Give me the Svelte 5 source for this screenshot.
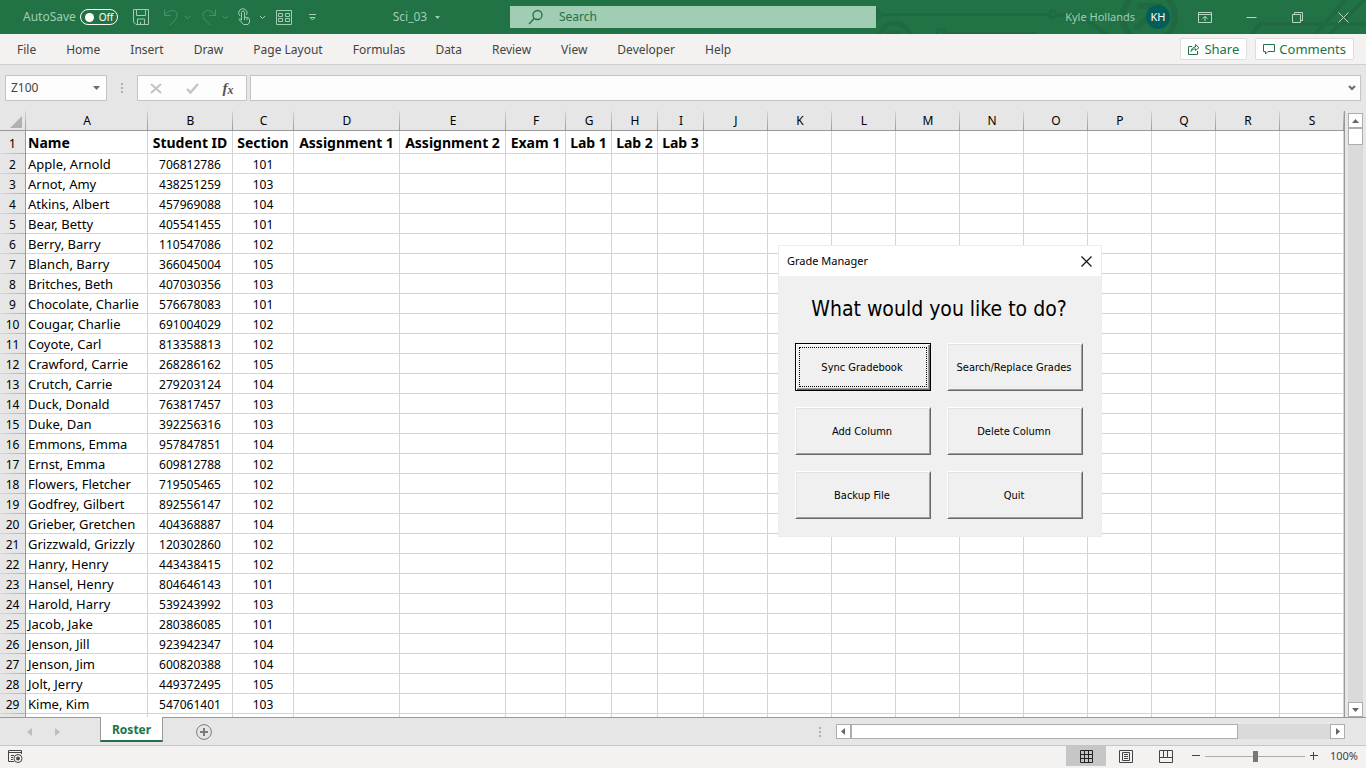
<script>
  const tabs = ['File', 'Home', 'Insert', 'Draw', 'Page Layout', 'Formulas', 'Data', 'Review', 'View', 'Developer', 'Help'];

  const columns = [
    { letter: 'A', width: 122, title: 'Name' },
    { letter: 'B', width: 85, title: 'Student ID' },
    { letter: 'C', width: 61, title: 'Section' },
    { letter: 'D', width: 106, title: 'Assignment 1' },
    { letter: 'E', width: 106, title: 'Assignment 2' },
    { letter: 'F', width: 60, title: 'Exam 1' },
    { letter: 'G', width: 46, title: 'Lab 1' },
    { letter: 'H', width: 46, title: 'Lab 2' },
    { letter: 'I', width: 46, title: 'Lab 3' },
    ...'JKLMNOPQRS'.split('').map((letter) => ({ letter, width: 64, title: '' }))
  ];

  const students = [
    ['Apple, Arnold', '706812786', '101'],
    ['Arnot, Amy', '438251259', '103'],
    ['Atkins, Albert', '457969088', '104'],
    ['Bear, Betty', '405541455', '101'],
    ['Berry, Barry', '110547086', '102'],
    ['Blanch, Barry', '366045004', '105'],
    ['Britches, Beth', '407030356', '103'],
    ['Chocolate, Charlie', '576678083', '101'],
    ['Cougar, Charlie', '691004029', '102'],
    ['Coyote, Carl', '813358813', '102'],
    ['Crawford, Carrie', '268286162', '105'],
    ['Crutch, Carrie', '279203124', '104'],
    ['Duck, Donald', '763817457', '103'],
    ['Duke, Dan', '392256316', '103'],
    ['Emmons, Emma', '957847851', '104'],
    ['Ernst, Emma', '609812788', '102'],
    ['Flowers, Fletcher', '719505465', '102'],
    ['Godfrey, Gilbert', '892556147', '102'],
    ['Grieber, Gretchen', '404368887', '104'],
    ['Grizzwald, Grizzly', '120302860', '102'],
    ['Hanry, Henry', '443438415', '102'],
    ['Hansel, Henry', '804646143', '101'],
    ['Harold, Harry', '539243992', '103'],
    ['Jacob, Jake', '280386085', '101'],
    ['Jenson, Jill', '923942347', '104'],
    ['Jenson, Jim', '600820388', '104'],
    ['Jolt, Jerry', '449372495', '105'],
    ['Kime, Kim', '547061401', '103']
  ];

  const actions = ['Sync Gradebook', 'Search/Replace Grades', 'Add Column', 'Delete Column', 'Backup File', 'Quit'];

  let cellRef = $state('Z100');
  let formula = $state('');
  let query = $state('');
  let zoom = $state(100);
</script>

<div class="app">
  <header class="titlebar">
    <svg class="circuit" width="500" height="34" viewBox="866 0 500 34" fill="none" stroke="#1f6a42" stroke-width="4" aria-hidden="true">
      <path d="M877 10v9l5-4.500zM880 14.500h169" stroke-width="3" />
      <circle cx="1053" cy="14.500" r="3.500" stroke-width="3" />
      <path d="M1057 15h16q8 0 14 5l22 16" />
      <circle cx="895" cy="38" r="15" stroke-width="5" />
      <path d="M886 33h16" />
      <circle cx="941" cy="33" r="3.500" stroke-width="3" />
      <path d="M946 34h90" />
      <circle cx="1149" cy="17" r="26" stroke-width="6" />
      <path d="M1137 6h26M1158 8l-22 21" stroke-width="6" />
      <path d="M1250 36l10-12h106M1314 36l33-38M1328 36l38-38" />
    </svg>
    <div class="quick">
      <span class="autosave">AutoSave</span>
      <button class="toggle" aria-label="AutoSave"><i></i><span>Off</span></button>
      <button class="tool save" aria-label="Save">
        <svg width="18" height="18" viewBox="0 0 18 18"><path d="M1.500 1.500h15v15H4L1.500 14zM4.500 1.500v6h9v-6M5.500 16.500v-5.500h7v5.500M8.500 16v-2" /></svg>
      </button>
      <button class="tool dim undo" aria-label="Undo">
        <svg width="16" height="18" viewBox="0 0 16 18"><path d="M1.500 1.500v6h6M1.500 7.500C4 4 6.500 2.500 9.500 2.500c3 0 4.500 2 4.500 4.500 0 4-3 6-7 10" /></svg>
        <svg width="7" height="5" viewBox="0 0 7 5"><path d="M1 1l2.500 2.500L6 1" /></svg>
      </button>
      <button class="tool dim redo" aria-label="Redo">
        <svg width="16" height="18" viewBox="0 0 16 18"><path d="M14.500 1.500v6h-6M14.500 7.500C12 4 9.500 2.500 6.500 2.500c-3 0-4.500 2-4.500 4.500 0 4 3 6 7 10" /></svg>
        <svg width="7" height="5" viewBox="0 0 7 5"><path d="M1 1l2.500 2.500L6 1" /></svg>
      </button>
      <button class="tool touch" aria-label="Touch mode">
        <svg width="14" height="18" viewBox="0 0 14 18"><path d="M4.500 12V4.500a1.500 1.500 0 0 1 3 0V9l3.500.7q1.500.3 1.500 2V14l-1.500 2.500H6.500L2 11.500q.5-1.500 2.500.5M3 8A4.200 4.200 0 1 1 9.500 7M7.500 9v3M10 10v2" /></svg>
        <svg width="7" height="5" viewBox="0 0 7 5"><path d="M1 1l2.500 2.500L6 1" /></svg>
      </button>
      <button class="tool form" aria-label="Form">
        <svg width="16" height="15" viewBox="0 0 16 15"><path d="M.5.500h15v14H.5zM2.500 3.500h4v3h-4zM9.500 3.500h4v3h-4zM2.500 8.500h4v3h-4zM9.500 8.500h4v3h-4z" /></svg>
      </button>
      <button class="tool more" aria-label="Customize toolbar">
        <svg width="7" height="7" viewBox="0 0 7 7"><path d="M0 .5h7M1 3.500h5L3.500 6z" /></svg>
      </button>
      <button class="file">Sci_03 <svg width="5" height="3" viewBox="0 0 5 3"><path d="M0 0h5L2.500 3z" /></svg></button>
    </div>
    <label class="search">
      <svg width="16" height="16" viewBox="0 0 16 16"><circle cx="9.500" cy="6" r="4.500" /><path d="M6.200 9.500L1 15" /></svg>
      <input aria-label="Search" placeholder="Search" bind:value={query} />
    </label>
    <div class="account">
      <span class="user">Kyle Hollands</span>
      <span class="avatar">KH</span>
      <button class="win" aria-label="Ribbon display options">
        <svg width="14" height="11" viewBox="0 0 14 11"><path d="M.5.500h13v10H.5zM.5 2.500h13M7 9V4.500M4.500 6.500L7 4.500l2.500 2" /></svg>
      </button>
      <button class="win" aria-label="Minimize"><svg width="11" height="11" viewBox="0 0 11 11"><path d="M.5 5.500h10" /></svg></button>
      <button class="win" aria-label="Restore"><svg width="11" height="11" viewBox="0 0 11 11"><path d="M.5 2.500h8v8h-8zM2.500 2.500v-2h8v8h-2" /></svg></button>
      <button class="win" aria-label="Close"><svg width="11" height="11" viewBox="0 0 11 11"><path d="M.5.500l10 10M10.500.500l-10 10" /></svg></button>
    </div>
  </header>

  <nav class="ribbon">
    {#each tabs as tab}<button class="tab">{tab}</button>{/each}
    <div class="collab">
      <button>
        <svg width="12" height="12" viewBox="0 0 12 12"><path d="M4 3.500H.5v8h9V8M3 8.500C3.500 5.500 5 4 7.500 4V1.500L11 4.700 7.500 7.500V5.800C5.500 5.800 4 6.500 3 8.500z" /></svg>Share
      </button>
      <button>
        <svg width="12" height="11" viewBox="0 0 12 11"><path d="M.5.500h11v7H5L2.500 10V7.500h-2z" /></svg>Comments
      </button>
    </div>
  </nav>

  <div class="formulabar">
    <div class="namebox">
      <input aria-label="Name box" bind:value={cellRef} />
      <button aria-label="Name list"><svg width="7" height="4" viewBox="0 0 7 4"><path d="M0 0h7L3.500 4z" fill="#6b6b6b" /></svg></button>
    </div>
    <i class="grip"></i>
    <div class="entry">
      <button aria-label="Cancel"><svg width="12" height="11" viewBox="0 0 12 11"><path d="M1 1l10 9M11 1L1 10" stroke="#c3c3c3" stroke-width="2" /></svg></button>
      <button aria-label="Enter"><svg width="13" height="11" viewBox="0 0 13 11"><path d="M1 6l3.500 3.500L12 1" fill="none" stroke="#c3c3c3" stroke-width="2.400" /></svg></button>
      <button class="fx" aria-label="Insert function">f<small>x</small></button>
    </div>
    <div class="formula">
      <input aria-label="Formula" bind:value={formula} />
      <button aria-label="Expand formula bar"><svg width="8" height="6" viewBox="0 0 8 6"><path d="M1 1l3 3 3-3" fill="none" stroke="#6b6b6b" stroke-width="2" /></svg></button>
    </div>
  </div>

  <main class="work">
    <div class="sheet">
      <table>
        <colgroup>
          <col style="width: 26px" />
          {#each columns as c}<col style="width: {c.width}px" />{/each}
        </colgroup>
        <thead>
          <tr>
            <th class="corner"><svg width="12" height="12" viewBox="0 0 12 12"><path d="M12 0v12H0z" fill="#b1b1b1" /></svg></th>
            {#each columns as c}<th>{c.letter}</th>{/each}
          </tr>
        </thead>
        <tbody>
          <tr class="titles">
            <th>1</th>
            {#each columns as c}<td>{c.title}</td>{/each}
          </tr>
          {#each students as student, i}
            <tr>
              <th>{i + 2}</th>
              {#each columns as c, j}<td>{student[j] ?? ''}</td>{/each}
            </tr>
          {/each}
          <tr>
            <th></th>
            {#each columns as c}<td></td>{/each}
          </tr>
        </tbody>
      </table>
    </div>
    <div class="vscroll">
      <button aria-label="Scroll up"><svg width="7" height="4" viewBox="0 0 7 4"><path d="M0 4h7L3.500 0z" /></svg></button>
      <i class="thumb"></i>
      <button class="end" aria-label="Scroll down"><svg width="7" height="4" viewBox="0 0 7 4"><path d="M0 0h7L3.500 4z" /></svg></button>
    </div>
  </main>

  <div class="sheetbar">
    <button class="step" aria-label="Previous sheet"><svg width="5" height="8" viewBox="0 0 5 8"><path d="M5 0v8L0 4z" /></svg></button>
    <button class="step" aria-label="Next sheet"><svg width="5" height="8" viewBox="0 0 5 8"><path d="M0 0v8l5-4z" /></svg></button>
    <button class="sheettab">Roster</button>
    <button class="add" aria-label="New sheet">
      <svg width="16" height="16" viewBox="0 0 16 16" fill="none" stroke="#7b7b7b"><circle cx="8" cy="8" r="7.400" /><path d="M4 8h8M8 4v8" stroke-width="2" /></svg>
    </button>
    <i class="grip"></i>
    <div class="hscroll">
      <button aria-label="Scroll left"><svg width="4" height="7" viewBox="0 0 4 7"><path d="M4 0v7L0 3.500z" /></svg></button>
      <i class="thumb"></i>
      <button class="end" aria-label="Scroll right"><svg width="4" height="7" viewBox="0 0 4 7"><path d="M0 0v7l4-3.500z" /></svg></button>
    </div>
  </div>

  <footer class="status">
    <button class="macro" aria-label="Record macro">
      <svg width="15" height="13" viewBox="0 0 15 13" fill="none" stroke="#444"><path d="M6 11.500H.5V.500h13V4M.5 2.500h13M3 5.500h3M3 7.500h2M3 9.500h2" /><circle cx="10" cy="8.500" r="4" /><circle cx="10" cy="8.500" r="1.500" fill="#444" /></svg>
    </button>
    <button class="view on" aria-label="Normal view"><svg width="13" height="13" viewBox="0 0 13 13"><path d="M.5.500h12v12H.5zM4.500 0v13M8.500 0v13M0 4.500h13M0 8.500h13" /></svg></button>
    <button class="view" aria-label="Page layout view"><svg width="14" height="13" viewBox="0 0 14 13"><path d="M.5.500h13v12H.5zM3.500 2.500h7v8h-7zM5 4.500h4M5 6.500h4M5 8.500h4" /></svg></button>
    <button class="view" aria-label="Page break view"><svg width="14" height="13" viewBox="0 0 14 13"><path d="M.5.500h13v12H.5zM.5 7.500h8v-7M4.500.500v7M8.500 7.500h5" /></svg></button>
    <button class="zoomstep" aria-label="Zoom out"><svg width="8" height="8" viewBox="0 0 8 8"><path d="M0 3.500h8" /></svg></button>
    <input type="range" aria-label="Zoom" min="0" max="200" bind:value={zoom} />
    <button class="zoomstep" aria-label="Zoom in"><svg width="8" height="8" viewBox="0 0 8 8"><path d="M0 3.500h8M3.500 0v8" /></svg></button>
    <span class="percent">{zoom}%</span>
  </footer>

  <section class="dialog" role="dialog" aria-labelledby="dialog-title">
    <div class="caption">
      <span id="dialog-title">Grade Manager</span>
      <button aria-label="Close dialog"><svg width="11" height="11" viewBox="0 0 11 11"><path d="M.5.500l10 10M10.500.500l-10 10" stroke="#111" stroke-width="1.200" /></svg></button>
    </div>
    <h2>What would you like to do?</h2>
    <div class="actions">
      {#each actions as action, i}
        <button class:primary={i === 0}><span>{action}</span></button>
      {/each}
    </div>
  </section>
</div>

<style>
  :global(body) { margin: 0; }
  .app {
    position: relative;
    display: flex;
    flex-direction: column;
    height: 100vh;
    overflow: hidden;
    background: #e6e6e6;
    color: #444;
    font: 12px/16px "Noto Sans", "Open Sans", sans-serif;
  }
  button, input { margin: 0; padding: 0; border: 0; background: none; color: inherit; font: inherit; outline: 0; }
  button { display: flex; align-items: center; justify-content: center; }
  svg { display: block; flex: none; }
  i { display: block; }

  .titlebar {
    position: relative;
    display: grid;
    grid-template-columns: 510fr 366fr 490fr;
    align-items: center;
    height: 34px;
    flex: none;
    background: #217346;
    color: #a0cdb4;
  }
  .circuit { position: absolute; right: 0; top: 0; }
  .quick { display: flex; align-items: center; padding-left: 23px; }
  .autosave { width: 57px; }
  .toggle {
    box-sizing: border-box;
    width: 38px;
    height: 16px;
    gap: 5px;
    border: 1px solid #fff;
    border-radius: 8px;
    color: #fff;
    font-size: 10px;
  }
  .toggle i { width: 9px; height: 9px; border-radius: 50%; background: #fff; }
  .tool { gap: 5px; }
  .tool svg { fill: none; stroke: #a0cdb4; }
  .tool.dim svg { stroke: #4d9069; }
  .save { margin-left: 14px; }
  .undo { margin-left: 13px; }
  .redo { margin-left: 10px; }
  .touch { gap: 8px; margin-left: 8px; }
  .form { margin-left: 10px; }
  .more { margin-left: 17px; }
  .file { gap: 8px; margin: 0 auto; padding-left: 7px; }
  .file svg { fill: #a0cdb4; }
  .search {
    position: relative;
    display: flex;
    align-items: center;
    gap: 15px;
    height: 22px;
    padding-left: 18px;
    background: #a0cdb4;
  }
  .search svg { fill: none; stroke: #217346; stroke-width: 1.3; }
  .search input { flex: 1; min-width: 0; color: #217346; }
  .search input::placeholder { color: #217346; opacity: 1; }
  .account { position: relative; display: flex; align-items: center; justify-content: flex-end; }
  .user { font-size: 11px; }
  .avatar {
    width: 24px;
    height: 24px;
    margin: 0 12px 0 11px;
    border-radius: 50%;
    background: #035d58;
    color: #fff;
    font-size: 11px;
    line-height: 24px;
    text-align: center;
  }
  .win { width: 46px; height: 34px; }
  .win svg { fill: none; stroke: #b4d8c4; }

  .ribbon {
    display: flex;
    align-items: center;
    gap: 30px;
    height: 30px;
    flex: none;
    padding: 0 12px 0 17px;
    border-bottom: 1px solid #cfcfcf;
    background: #f3f2f1;
  }
  .tab { padding-top: 2px; }
  .collab { display: flex; gap: 8px; margin-left: auto; }
  .collab button {
    gap: 4px;
    height: 22px;
    padding: 0 7px;
    border: 1px solid #dfdddb;
    border-radius: 2px;
    background: #fff;
    color: #217346;
    font-size: 13px;
  }
  .collab svg { fill: none; stroke: #217346; }

  .formulabar { display: flex; align-items: center; height: 46px; flex: none; padding: 0 5px; }
  .namebox, .entry, .formula {
    box-sizing: border-box;
    display: flex;
    align-items: center;
    height: 26px;
    border: 1px solid #c4c4c4;
    background: #fdfdfd;
  }
  .namebox { width: 102px; padding: 0 6px 0 5px; }
  .namebox input, .formula input { flex: 1; min-width: 0; }
  .grip { width: 2px; height: 10px; background: repeating-linear-gradient(#b0b0b0 0 2px, transparent 2px 4px); }
  .formulabar .grip { margin: 0 14px; }
  .entry { width: 110px; }
  .entry button { flex: 1; }
  .fx { color: #555; font: italic bold 15px/16px "Liberation Serif", serif; }
  .fx small { font-size: 12px; padding-top: 3px; }
  .formula { flex: 1; margin-left: 3px; padding-right: 4px; }

  .work { display: flex; flex: 1; min-height: 0; border-bottom: 1px solid #999; }
  .sheet { flex: 1; min-width: 0; overflow: hidden; border-right: 1px solid #999; }
  table { width: 1343px; table-layout: fixed; border-spacing: 0; color: #000; background: #fff; }
  th, td { box-sizing: border-box; height: 20px; padding: 0; overflow: hidden; white-space: nowrap; font-weight: 400; line-height: 16px; text-align: center; }
  tbody th, td { padding-top: 2px; }
  td { border-right: 1px solid #d4d4d4; border-bottom: 1px solid #d4d4d4; }
  td:nth-child(2) { padding: 0 0 0 2px; font-size: 13px; text-align: left; }
  thead th {
    border-bottom: 1px solid #999;
    background: linear-gradient(#d6d6d6, #999) right / 1px 100% no-repeat #e6e6e6;
  }
  tbody th {
    border-right: 1px solid #999;
    background: linear-gradient(90deg, #d8d8d8, #b0b0b0) bottom / 100% 1px no-repeat #e6e6e6;
  }
  .corner svg { margin: 2px 0 0 10px; }
  .titles th { height: 23px; }
  .titles td, .titles td:nth-child(2) { padding-top: 2px; font-size: 14px; font-weight: 700; }

  .vscroll { display: flex; flex-direction: column; width: 15px; margin: 2px 3px 0; background: #dadada; }
  .vscroll button, .hscroll button { box-sizing: border-box; width: 15px; height: 15px; border: 1px solid #adadad; background: #fff; }
  .vscroll svg, .hscroll svg { fill: #666; }
  .vscroll .thumb { height: 15px; border: 1px solid #adadad; background: #fff; }
  .vscroll .end { margin-top: auto; }

  .sheetbar { display: flex; align-items: center; height: 27px; flex: none; padding: 0 21px 0 15px; border-bottom: 1px solid #c6c6c6; }
  .step { width: 28px; height: 16px; }
  .step svg { fill: #bdbdbd; }
  .sheettab {
    box-sizing: border-box;
    align-self: flex-start;
    height: 25px;
    margin: -1px 33px 0 29px;
    padding: 2px 11px 0;
    border: 1px solid #999;
    border-width: 0 1px 2px;
    border-bottom-color: #217346;
    background: #fff;
    color: #217346;
    font-weight: 700;
    z-index: 1;
  }
  .sheetbar .grip { margin-left: auto; margin-right: 15px; }
  .hscroll { display: flex; width: 38.3%; background: #dadada; }
  .hscroll .thumb { box-sizing: border-box; width: 76%; height: 15px; border: 1px solid #adadad; background: #fff; }
  .hscroll .end { margin-left: auto; }

  .status { display: flex; align-items: center; height: 20px; flex: none; padding: 0 8px 2px; background: #f3f2f1; }
  .macro { margin-right: auto; }
  .view { width: 40px; height: 20px; }
  .view svg { fill: none; stroke: #444; }
  .view.on { background: #c6c6c6; }
  .view.on svg { stroke: #222; }
  .zoomstep { width: 16px; height: 16px; }
  .view + .zoomstep { margin-left: 2px; }
  .zoomstep svg { stroke: #444; }
  .status input {
    appearance: none;
    width: 100px;
    height: 12px;
    margin: 0 1px;
    background: linear-gradient(#adadad, #adadad) center / 100% 1px no-repeat;
  }
  .status input::-webkit-slider-thumb { appearance: none; width: 5px; height: 11px; background: #777; }
  .percent { width: 36px; font-size: 11px; text-align: right; }

  .dialog {
    position: absolute;
    left: 778px;
    top: 245px;
    box-sizing: border-box;
    width: 324px;
    padding-bottom: 17px;
    border: 1px solid #ececec;
    background: #f0f0f0;
    color: #000;
    font: 11px/16px "DejaVu Sans Condensed", "DejaVu Sans", sans-serif;
    font-stretch: condensed;
  }
  .caption { display: flex; align-items: center; justify-content: space-between; height: 30px; padding: 0 9px 0 8px; background: #fff; font: 11px/16px "Noto Sans", sans-serif; }
  h2 { margin: 0; padding: 21px 2px 22px 0; font-size: 21px; line-height: 24px; font-weight: 400; text-align: center; }
  .actions { display: grid; grid-template-columns: 1fr 1fr; gap: 16px; padding: 0 18px 0 16px; }
  .actions button {
    height: 48px;
    padding: 2px;
    border: 1px solid;
    border-color: #fff #696969 #696969 #fff;
    box-shadow: inset 1px 1px #e3e3e3, inset -1px -1px #a0a0a0;
  }
  .actions .primary { border-color: #000; box-shadow: inset 1px 1px #fff, inset -1px -1px #696969, inset -2px -2px #a0a0a0; }
  .actions span { display: flex; align-items: center; justify-content: center; width: 100%; height: 100%; box-sizing: border-box; padding: 2px 2px 0 0; white-space: nowrap; }
  .actions .primary { padding: 3px; }
  .primary span { border: 1px dotted #000; }
</style>
